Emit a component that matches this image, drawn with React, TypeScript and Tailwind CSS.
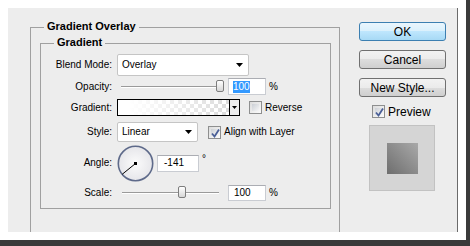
import React from "react";

function Arrow() {
  return (
    <svg width="7" height="4" viewBox="0 0 7 4" className="block">
      <polygon points="0,0 7,0 3.5,4" fill="#000" />
    </svg>
  );
}

function Check({ checked }: { checked?: boolean }) {
  return (
    <div className="w-[13px] h-[13px] border border-[#8e8f8f] bg-[linear-gradient(135deg,#dcdcdc,#fbfbfb)] p-[2px] shrink-0">
      <div className="w-full h-full bg-[linear-gradient(135deg,#cbcfd5,#f6f6f6)] relative">
        {checked && (
          <svg width="11" height="11" viewBox="0 0 11 11" className="absolute -left-[1px] -top-[1px]">
            <path d="M2 5.5 L4.5 8.5 L9 1.5" stroke="#4a5f97" strokeWidth="1.8" fill="none" />
          </svg>
        )}
      </div>
    </div>
  );
}

function Slider({ width, thumb, pad }: { width: number; thumb: number; pad: string }) {
  return (
    <div className={`w-[111px] h-full flex items-center ${pad}`}>
      <div className="relative" style={{ width }}>
        <div className="h-[2px] border-t border-[#9a9a9a] border-b border-b-white" />
        <div
          className="absolute -top-[6px] w-[8px] h-[12px] rounded-[2px] border border-[#7d7d7d] bg-[linear-gradient(#ffffff,#d6d6d6)]"
          style={{ left: thumb }}
        />
      </div>
    </div>
  );
}

function Btn({ children, def }: { children: React.ReactNode; def?: boolean }) {
  return (
    <div
      className={
        "h-[19px] w-[87px] rounded-[3px] border flex items-center justify-center text-[12px] text-black leading-none " +
        (def
          ? "border-[#3c7fb1] bg-[linear-gradient(#eaf6fd_0%,#d9f0fc_50%,#bee6fd_50%,#a7d9f5_100%)]"
          : "border-[#707070] bg-[linear-gradient(#f2f2f2_0%,#ebebeb_50%,#dddddd_50%,#cfcfcf_100%)]")
      }
    >
      {children}
    </div>
  );
}

export default function App() {
  return (
    <div className="w-[470px] h-[246px] bg-[#3a3a3a] font-['Liberation_Sans',Arial,sans-serif] text-black">
      <div className="w-[466px] h-[240px] bg-white p-[8px]">
        <div className="w-[450px] h-[224px] bg-[#ededed] border-r border-[#6b6b6b] flex overflow-hidden">
          {/* Outer group */}
          <div className="relative ml-[22px] mt-[19px] w-[310px] h-[230px] border border-[#a0a0a0] shrink-0">
            <span className="absolute -top-[8px] left-[13px] px-[3px] bg-[#ededed] text-[11px] font-bold leading-[13px]">
              Gradient Overlay
            </span>
            {/* Inner group */}
            <div className="relative ml-[9px] mt-[15px] w-[291px] h-[166px] border border-[#a0a0a0]">
              <span className="absolute -top-[8px] left-[13px] px-[3px] bg-[#ededed] text-[11px] font-bold leading-[13px]">
                Gradient
              </span>
              <div className="flex flex-col text-[10px] leading-none">
                {/* Blend mode */}
                <div className="flex items-center h-[22px] mt-[10px]">
                  <div className="w-[71px] text-right">Blend Mode:</div>
                  <div className="ml-[5px] w-[132px] h-[22px] bg-white border border-[#c5c5c5] rounded-[2px] flex items-center justify-between pl-[4px] pr-[5px]">
                    <span>Overlay</span>
                    <Arrow />
                  </div>
                </div>
                {/* Opacity */}
                <div className="flex items-center h-[17px] mt-[2px]">
                  <div className="w-[71px] text-right">Opacity:</div>
                  <div className="ml-[5px] h-full">
                    <Slider width={102} thumb={95} pad="pl-[4px]" />
                  </div>
                  <div className="w-[38px] h-[17px] bg-white border border-[#c9ccd2] border-t-[#abadb3] flex items-center pl-[4px]">
                    <span className="bg-[#3399ff] text-white px-[0px] leading-[12px]">100</span>
                  </div>
                  <span className="ml-[3px]">%</span>
                </div>
                {/* Gradient */}
                <div className="flex items-center h-[17px] mt-[4px]">
                  <div className="w-[71px] text-right">Gradient:</div>
                  <div className="ml-[5px] w-[123px] h-[17px] border border-black flex">
                    <div className="flex-1 h-full bg-[conic-gradient(#dcdcdc_25%,#ffffff_0_50%,#dcdcdc_0_75%,#ffffff_0)] bg-[length:8px_8px]">
                      <div className="w-full h-full bg-[linear-gradient(to_right,#ffffff_10%,rgba(255,255,255,0))]" />
                    </div>
                    <div className="w-[10px] h-full border-l border-black bg-[#ededed] flex items-center justify-center">
                      <svg width="5" height="3" viewBox="0 0 5 3" className="block">
                        <polygon points="0,0 5,0 2.5,3" fill="#000" />
                      </svg>
                    </div>
                  </div>
                  <div className="ml-[9px]">
                    <Check />
                  </div>
                  <span className="ml-[3px]">Reverse</span>
                </div>
                {/* Style */}
                <div className="flex items-center h-[20px] mt-[6px]">
                  <div className="w-[71px] text-right">Style:</div>
                  <div className="ml-[5px] w-[81px] h-[20px] bg-white border border-[#c5c5c5] rounded-[2px] flex items-center justify-between pl-[4px] pr-[5px]">
                    <span>Linear</span>
                    <Arrow />
                  </div>
                  <div className="ml-[10px]">
                    <Check checked />
                  </div>
                  <span className="ml-[3px]">Align with Layer</span>
                </div>
                {/* Angle */}
                <div className="flex items-center h-[36px] mt-[3px]">
                  <div className="w-[71px] text-right">Angle:</div>
                  <svg width="37" height="37" viewBox="0 0 37 37" className="ml-[5px] block">
                    <defs>
                      <radialGradient id="cg" cx="0.5" cy="0.5" r="0.5">
                        <stop offset="0%" stopColor="#fbfbfb" />
                        <stop offset="100%" stopColor="#e6e6ea" />
                      </radialGradient>
                    </defs>
                    <circle cx="18.5" cy="18.5" r="17.2" fill="url(#cg)" stroke="#5e6a8a" strokeWidth="1.6" />
                    <line x1="18.5" y1="18.5" x2="5.2" y2="29.3" stroke="#000" strokeWidth="1" />
                    <rect x="17" y="17" width="3" height="3" fill="#000" />
                  </svg>
                  <div className="ml-[3px] w-[42px] h-[17px] bg-white border border-[#c9ccd2] border-t-[#abadb3] flex items-center pl-[6px]">
                    -141
                  </div>
                  <span className="ml-[3px] self-start mt-[9px] text-[10px]">°</span>
                </div>
                {/* Scale */}
                <div className="flex items-center h-[16px] mt-[4px]">
                  <div className="w-[71px] text-right">Scale:</div>
                  <div className="ml-[5px] h-full">
                    <Slider width={97} thumb={56} pad="pl-[5px]" />
                  </div>
                  <div className="w-[38px] h-[16px] bg-white border border-[#c9ccd2] border-t-[#abadb3] flex items-center pl-[5px]">
                    100
                  </div>
                  <span className="ml-[3px]">%</span>
                </div>
              </div>
            </div>
          </div>
          {/* Right column */}
          <div className="ml-[19px] mt-[14px] w-[87px] flex flex-col shrink-0">
            <div className="flex flex-col gap-[9px]">
              <Btn def>OK</Btn>
              <Btn>Cancel</Btn>
              <Btn>New Style...</Btn>
            </div>
            <div className="mt-[8px] h-[13px] flex items-center ml-[13px]">
              <Check checked />
              <span className="ml-[3px] text-[12px] leading-none">Preview</span>
            </div>
            <div className="mt-[7px] ml-[10px] w-[66px] h-[66px] bg-[#d5d5d5] border border-[#c2c2c2] flex items-center justify-center">
              <div className="w-[31px] h-[31px] bg-[linear-gradient(to_top_right,#6e6e6e,#a9a9a9)]" />
            </div>
          </div>
        </div>
      </div>
    </div>
  );
}
